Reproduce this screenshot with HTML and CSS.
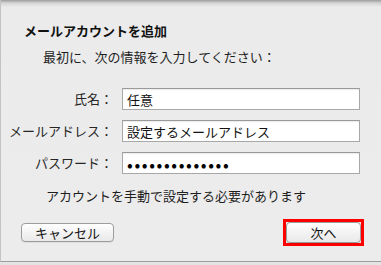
FILE: index.html
```html
<!DOCTYPE html>
<html lang="ja">
<head>
    <meta charset="UTF-8">
    <meta name="viewport" content="width=device-width, initial-scale=1.0">
    <title>メールアカウントを追加</title>
    <link rel="stylesheet" href="styles.css">
</head>
<body>
    <div id="sheet">
        <h1 class="sheet-title">メールアカウントを追加</h1>
        <p class="sheet-intro">最初に、次の情報を入力してください：</p>

        <div class="account-form">
            <label for="full-name">氏名：</label>
            <input type="text" id="full-name" value="任意" readonly>

            <label for="email">メールアドレス：</label>
            <input type="text" id="email" value="設定するメールアドレス" readonly>

            <label for="password">パスワード：</label>
            <input type="password" id="password" value="12345678901234" readonly>
        </div>

        <p class="sheet-note">アカウントを手動で設定する必要があります</p>

        <div class="sheet-buttons">
            <button class="mac-button cancel">キャンセル</button>
            <div class="highlight">
                <button class="mac-button next">次へ</button>
            </div>
        </div>
    </div>
</body>
</html>
```

FILE: styles.css
```css
* {
    margin: 0;
    padding: 0;
    box-sizing: border-box;
}

html, body {
    height: 100%;
    background-color: #e4e4e4;
    color: #1e1e1e;
    font-family: "Noto Sans CJK JP", "Liberation Sans", sans-serif;
    font-size: 13px;
    overflow: hidden;
}

#sheet {
    height: 262px;
    padding-top: 22px;
    background: linear-gradient(#9c9c9c 0px, #d4d4d4 3px, #ebebeb 7px, #ececec 100%);
    border-left: 1px solid #c4c4c4;
    border-bottom: 1px solid #9e9e9e;
}

.sheet-title {
    font-size: 13px;
    font-weight: bold;
    line-height: 18px;
    padding-left: 23px;
    color: #111;
}

.sheet-intro {
    line-height: 18px;
    margin-top: 8px;
    padding-left: 42px;
}

.account-form {
    display: grid;
    grid-template-columns: 112px 238px;
    grid-auto-rows: 22px;
    column-gap: 9px;
    row-gap: 10px;
    margin-top: 22px;
}

.account-form label {
    text-align: right;
    line-height: 22px;
    color: #262626;
}

.account-form input {
    height: 22px;
    border: 1px solid #a8a8a8;
    border-top-color: #9a9a9a;
    background-color: #fff;
    box-shadow: inset 0 1px 1px rgba(0, 0, 0, 0.08);
    font-family: "Noto Sans CJK JP", "Liberation Sans", sans-serif;
    font-size: 13px;
    color: #111;
    padding: 0 4px;
    outline: none;
}

.account-form input[type="password"] {
    letter-spacing: 1.6px;
    font-size: 17px;
    color: #000;
}

.sheet-note {
    line-height: 18px;
    margin-top: 13px;
    padding-left: 45px;
}

.sheet-buttons {
    display: flex;
    justify-content: space-between;
    align-items: center;
    margin-top: 14px;
    padding-left: 20px;
    padding-right: 17px;
}

.mac-button {
    font-family: "Noto Sans CJK JP", "Liberation Sans", sans-serif;
    font-size: 13px;
    line-height: 17px;
    color: #111;
    background: linear-gradient(#ffffff, #f1f1f1 60%, #e9e9e9);
    border: 1px solid #9c9c9c;
    border-radius: 4px;
    box-shadow: 0 1px 0 rgba(0, 0, 0, 0.06);
}

.cancel {
    width: 93px;
    height: 19px;
}

.highlight {
    border: 3px solid #ff0000;
    width: 81px;
    height: 27px;
}

.next {
    display: block;
    width: 75px;
    height: 21px;
}
```
